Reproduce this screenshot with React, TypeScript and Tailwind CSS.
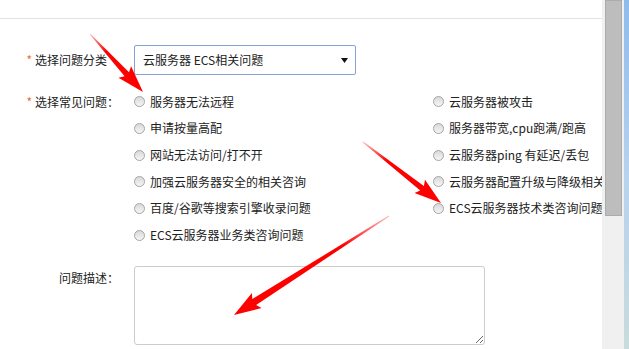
import React from 'react';

const leftItems = [
  '服务器无法远程',
  '申请按量高配',
  '网站无法访问/打不开',
  '加强云服务器安全的相关咨询',
  '百度/谷歌等搜索引擎收录问题',
  'ECS云服务器业务类咨询问题',
];

const rightItems = [
  '云服务器被攻击',
  '服务器带宽,cpu跑满/跑高',
  '云服务器ping 有延迟/丢包',
  '云服务器配置升级与降级相关问题',
  'ECS云服务器技术类咨询问题',
];

type Arrow = { tail: [number, number]; tip: [number, number]; head: number; wing: number; shaft: number };

// red annotation arrows drawn over the form
const arrows: Arrow[] = [
  { tail: [90, 34], tip: [143, 92], head: 24, wing: 17, shaft: 6 },
  { tail: [363, 142], tip: [441, 203], head: 24, wing: 17, shaft: 6 },
  { tail: [389, 216], tip: [234, 315], head: 24, wing: 18, shaft: 7 },
];

function arrowPoints(a: Arrow): string {
  const [tx, ty] = a.tail;
  const [px, py] = a.tip;
  const len = Math.hypot(px - tx, py - ty);
  const dx = (px - tx) / len;
  const dy = (py - ty) / len;
  const nx = -dy;
  const ny = dx;
  const bx = px - dx * a.head;
  const by = py - dy * a.head;
  const wx = px - dx * (a.head + 3);
  const wy = py - dy * (a.head + 3);
  const pts = [
    [tx + nx * 0.5, ty + ny * 0.5],
    [bx + nx * (a.shaft / 2), by + ny * (a.shaft / 2)],
    [wx + nx * (a.wing / 2), wy + ny * (a.wing / 2)],
    [px, py],
    [wx - nx * (a.wing / 2), wy - ny * (a.wing / 2)],
    [bx - nx * (a.shaft / 2), by - ny * (a.shaft / 2)],
    [tx - nx * 0.5, ty - ny * 0.5],
  ];
  return pts.map(([x, y]) => `${x.toFixed(1)},${y.toFixed(1)}`).join(' ');
}

function Radio({ label }: { label: string }) {
  return (
    <div className="flex h-[26.7px] items-center gap-[5px] whitespace-nowrap">
      <span className="h-[11px] w-[11px] shrink-0 rounded-full border border-[#a4a4a4] bg-linear-to-b from-[#d9d9d9] to-[#f6f6f6]" />
      <span>{label}</span>
    </div>
  );
}

export default function App(): React.ReactElement {
  const rows = leftItems.map((l, i) => [l, rightItems[i]] as const);

  return (
    <div className="relative flex h-[349px] w-[629px] overflow-hidden bg-white font-['Noto_Sans_CJK_SC','Microsoft_YaHei',sans-serif] text-[12px] text-[#222]">
      {/* Page content */}
      <div className="w-[602px] shrink-0 overflow-hidden">
        <div className="h-[18px]" />
        <div className="h-px bg-[#e2e2e2]" />

        <div className="mt-[26px] grid grid-cols-[119px_1fr] gap-x-[15px]">
          {/* Category */}
          <div className="flex h-[30px] items-center justify-end whitespace-nowrap pr-[12px]">
            <span className="mr-[3px] text-[#f06a35]">*</span>
            <span>选择问题分类</span>
          </div>
          <div className="flex h-[30px] w-[222px] items-center justify-between rounded-[2px] border border-[#86a2d2] bg-white pl-[8px] pr-[7px]">
            <span>云服务器 ECS相关问题</span>
            <svg width="7" height="5" viewBox="0 0 7 5">
              <polygon points="0,0 7,0 3.5,5" fill="#111" />
            </svg>
          </div>

          {/* Common issues */}
          <div className="mt-[13.4px] flex h-[26.7px] items-center justify-end whitespace-nowrap">
            <span className="mr-[3px] text-[#f06a35]">*</span>
            <span>选择常见问题：</span>
          </div>
          <div className="mt-[13.4px] grid grid-cols-[299px_1fr]">
            {rows.map(([l, r], i) => (
              <React.Fragment key={i}>
                <Radio label={l} />
                {r ? <Radio label={r} /> : <div />}
              </React.Fragment>
            ))}
          </div>

          {/* Description */}
          <div className="mt-[17.5px] pt-[3px] text-right leading-[17px]">问题描述：</div>
          <textarea className="mt-[17.5px] block h-[79px] w-[351px] rounded-[3px] border border-[#cccccc] bg-white outline-none" />
        </div>
      </div>

      {/* Scrollbar */}
      <div className="h-full w-[22px] shrink-0 bg-[#f0f0f0] pl-[3px] pr-[2px]">
        <div className="h-[216px] w-[17px] border border-[#acacac] bg-[#bdbdbd]" />
      </div>

      {/* Window frame edge */}
      <div className="h-full flex-1 bg-linear-to-b from-[#8fbbec] via-[#b7d2ee] to-[#c9dbdc]" />

      <svg className="pointer-events-none absolute left-0 top-0" width="629" height="349" viewBox="0 0 629 349">
        <defs>
          {arrows.map((a, i) => (
            <linearGradient
              key={i}
              id={`ag${i}`}
              gradientUnits="userSpaceOnUse"
              x1={a.tail[0]}
              y1={a.tail[1]}
              x2={a.tip[0]}
              y2={a.tip[1]}
            >
              <stop offset="0" stopColor="#ff0000" stopOpacity="0.25" />
              <stop offset="0.3" stopColor="#ff0000" stopOpacity="1" />
              <stop offset="1" stopColor="#ff0000" stopOpacity="1" />
            </linearGradient>
          ))}
        </defs>
        {arrows.map((a, i) => (
          <polygon key={i} points={arrowPoints(a)} fill={`url(#ag${i})`} />
        ))}
      </svg>
    </div>
  );
}
